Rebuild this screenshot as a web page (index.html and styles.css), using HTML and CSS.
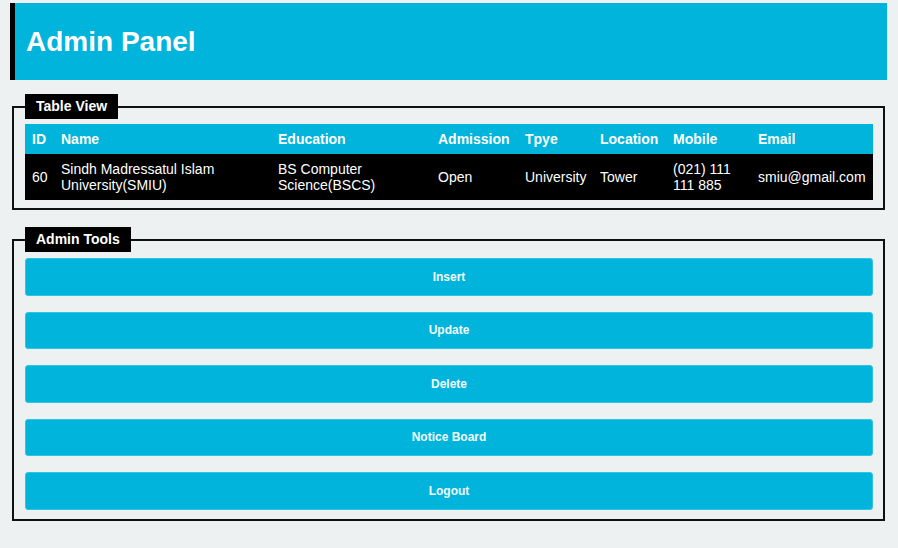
FILE: index.html
```html
<!DOCTYPE html>
<html>
<head>
<meta charset="utf-8">
<title>Admin Panel</title>
<link rel="stylesheet" href="styles.css">
</head>
<body>
<div class="page">
  <header class="topbar"><h1>Admin Panel</h1></header>

  <fieldset class="box box-table">
    <legend>Table View</legend>
    <table class="grid">
      <colgroup>
        <col style="width:29px"><col style="width:217px"><col style="width:160px"><col style="width:87px">
        <col style="width:75px"><col style="width:73px"><col style="width:85px"><col style="width:122px">
      </colgroup>
      <thead>
        <tr><th>ID</th><th>Name</th><th>Education</th><th>Admission</th><th>Tpye</th><th>Location</th><th>Mobile</th><th>Email</th></tr>
      </thead>
      <tbody>
        <tr><td>60</td><td>Sindh Madressatul Islam University(SMIU)</td><td>BS Computer Science(BSCS)</td><td>Open</td><td>University</td><td>Tower</td><td>(021) 111 111 885</td><td>smiu@gmail.com</td></tr>
      </tbody>
    </table>
  </fieldset>

  <fieldset class="box box-tools">
    <legend>Admin Tools</legend>
    <button class="btn">Insert</button>
    <button class="btn">Update</button>
    <button class="btn">Delete</button>
    <button class="btn">Notice Board</button>
    <button class="btn">Logout</button>
  </fieldset>
</div>
</body>
</html>
```

FILE: styles.css
```css
html, body {
  margin: 0;
  padding: 0;
  background: #eef1f2;
  font-family: "Liberation Sans", Arial, sans-serif;
}
.page {
  width: 877px;
  padding: 3px 0 0 10px;
}
.topbar {
  height: 77px;
  box-sizing: border-box;
  background: #00b4db;
  border-left: 5px solid #000;
  display: flex;
  align-items: center;
  padding-left: 11px;
}
.topbar h1 {
  margin: 0;
  color: #fff;
  font-size: 28px;
  font-weight: bold;
  line-height: 1;
}
.box {
  margin: 14px 2px 0 2px;
  border: 2px solid #111;
  padding: 0 10px 8px 11px;
  min-width: 0;
}
.box legend {
  background: #000;
  color: #fff;
  font-weight: bold;
  font-size: 14px;
  line-height: 25px;
  height: 25px;
  padding: 0 11px;
  margin-left: 0;
}
.box-tools {
  margin-top: 17px;
  padding-bottom: 9px;
}
.grid {
  margin-top: 5px;
  width: 848px;
  table-layout: fixed;
  border-collapse: collapse;
  color: #fff;
  font-size: 14px;
  line-height: 16px;
}
.grid th {
  background: #00b4db;
  text-align: left;
  font-weight: bold;
  padding: 7px 0 7px 7px;
}
.grid td {
  background: #000;
  padding: 7px 0 7px 7px;
  vertical-align: middle;
}
.btn {
  display: block;
  width: 848px;
  height: 37.5px;
  margin: 6px 0 16px 0;
  background: #00b4db;
  border: 1px solid #2fc3e6;
  border-radius: 3px;
  color: #f2fbfd;
  font-family: "Liberation Sans", Arial, sans-serif;
  font-size: 12px;
  font-weight: bold;
  padding: 0;
}
.btn + .btn {
  margin-top: 0;
}
.btn:last-child {
  margin-bottom: 0;
}
```
